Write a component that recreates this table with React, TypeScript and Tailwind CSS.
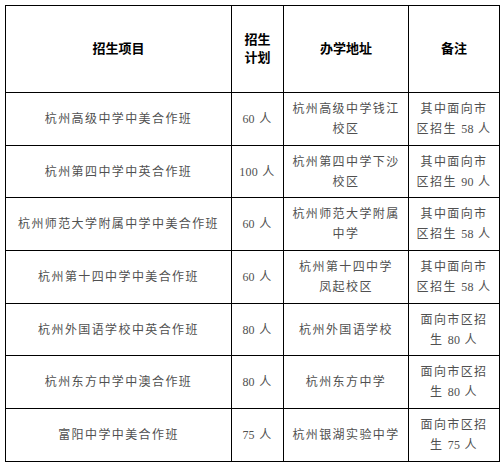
const rows = [
  { name: "杭州高级中学中美合作班", plan: "60", addr: ["杭州高级中学钱江", "校区"], note: ["其中面向市", "区招生 |58| 人"] },
  { name: "杭州第四中学中英合作班", plan: "100", addr: ["杭州第四中学下沙", "校区"], note: ["其中面向市", "区招生 |90| 人"] },
  { name: "杭州师范大学附属中学中美合作班", plan: "60", addr: ["杭州师范大学附属", "中学"], note: ["其中面向市", "区招生 |58| 人"] },
  { name: "杭州第十四中学中美合作班", plan: "60", addr: ["杭州第十四中学", "凤起校区"], note: ["其中面向市", "区招生 |58| 人"] },
  { name: "杭州外国语学校中英合作班", plan: "80", addr: ["杭州外国语学校"], note: ["面向市区招", "生 |80| 人"] },
  { name: "杭州东方中学中澳合作班", plan: "80", addr: ["杭州东方中学"], note: ["面向市区招", "生 |80| 人"] },
  { name: "富阳中学中美合作班", plan: "75", addr: ["杭州银湖实验中学"], note: ["面向市区招", "生 |75| 人"] },
];

// 表头单元格
const th = "border border-black px-1 text-center align-middle text-[13px] font-bold leading-[18px] text-black";
const td = "border border-black text-center align-middle text-[12px] leading-[20px] tracking-[1.4px] text-[#505050]";

// 数字不加字距
function Line({ text }: { text: string }) {
  const parts = text.split("|");
  return (
    <div className="whitespace-nowrap">
      {parts.map((p, i) =>
        i % 2 === 1 ? (
          <span key={i} className="tracking-[0.2px]">
            {p}
          </span>
        ) : (
          <span key={i}>{p}</span>
        )
      )}
    </div>
  );
}

export default function App() {
  return (
    <div
      className="min-h-screen bg-white pl-[5px] pt-[5px]"
      style={{ fontFamily: '"Liberation Serif", "Noto Sans CJK SC", serif' }}
    >
      <table className="w-[494px] table-fixed border-collapse">
        <colgroup>
          <col className="w-[226px]" />
          <col className="w-[52px]" />
          <col className="w-[125px]" />
          <col className="w-[91px]" />
        </colgroup>
        <thead>
          <tr className="h-[87px]">
            <th className={th}>招生项目</th>
            <th className={th}>
              招生
              <br />
              计划
            </th>
            <th className={th}>办学地址</th>
            <th className={th}>备注</th>
          </tr>
        </thead>
        <tbody>
          {rows.map((r) => (
            <tr key={r.name} className="h-[52.7px]">
              <td className={`${td} px-1`}>{r.name}</td>
              <td className={`${td} px-0`}>
                <Line text={`|${r.plan}| 人`} />
              </td>
              <td className={`${td} px-1`}>
                {r.addr.map((l) => (
                  <Line key={l} text={l} />
                ))}
              </td>
              <td className={`${td} px-1`}>
                {r.note.map((l) => (
                  <Line key={l} text={l} />
                ))}
              </td>
            </tr>
          ))}
        </tbody>
      </table>
    </div>
  );
}
